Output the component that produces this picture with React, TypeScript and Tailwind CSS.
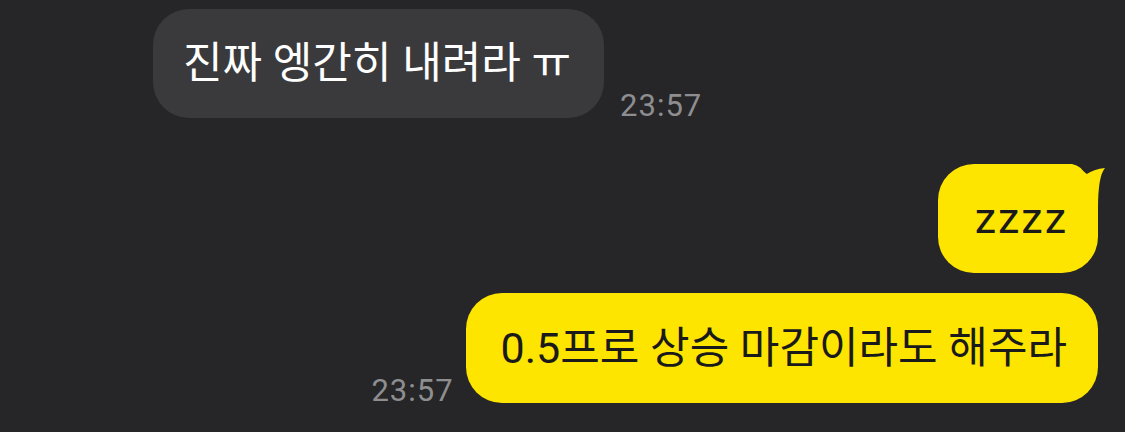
export default function App() {
  const font = { fontFamily: "Roboto, 'Noto Sans CJK KR', sans-serif" }
  return (
    <div
      className="w-[1125px] h-[432px] overflow-hidden bg-[#262628] flex flex-col"
      style={font}
    >
      {/* Received message */}
      <div className="flex items-end gap-4 pl-[153px] pt-[9px]">
        <div className="h-[109px] pl-[30px] pr-[33px] flex items-center rounded-[36px] bg-[#3a3a3c] text-white text-[43px] leading-none">
          진짜 엥간히 내려라 ㅠ
        </div>
        <span className="text-[31px] leading-[25px] tracking-[1px] text-[#8e8e90]">23:57</span>
      </div>

      {/* Sent messages */}
      <div className="flex flex-col items-end pr-[27px] pt-[46px] gap-[20px]">
        <div className="relative">
          <div className="h-[109px] pl-[37px] pr-[30px] flex items-center rounded-[36px] bg-[#fee500] text-[#1a1a1a] text-[43px] leading-none tracking-[2px]">
            zzzz
          </div>
          <svg
            className="absolute top-0 -right-[10px]"
            width="50"
            height="44"
            viewBox="0 0 50 44"
          >
            <path d="M0 0 L14 0 Q24 2 27 11 Q36 5 47 4 Q40 12 40 44 L0 44 Z" fill="#fee500" />
          </svg>
        </div>
        <div className="flex items-end gap-[12px]">
          <span className="text-[31px] leading-[25px] tracking-[1px] text-[#8e8e90]">23:57</span>
          <div className="h-[110px] pl-[35px] pr-[31px] flex items-center rounded-[36px] bg-[#fee500] text-[#1a1a1a] text-[43px] leading-none">
            0.5프로 상승 마감이라도 해주라
          </div>
        </div>
      </div>
    </div>
  )
}
